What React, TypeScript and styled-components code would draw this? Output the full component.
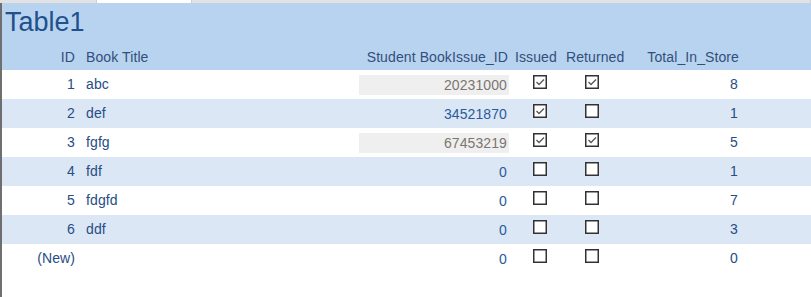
import React from "react";
import styled, { createGlobalStyle } from "styled-components";

const Global = createGlobalStyle`
  html, body { margin: 0; padding: 0; background: #ffffff; }
  body { font-family: "Liberation Sans", Arial, sans-serif; }
`;

const COLS = "78px 275px 157px 50px 78px 102px 1fr";

const Page = styled.div`
  width: 811px;
  height: 297px;
  display: flex;
  flex-direction: column;
  background: #ffffff;
  overflow: hidden;
`;

const TabStrip = styled.div`
  height: 3px;
  display: flex;
  background: #e2e2e2;
`;

const Tab = styled.div<{ $active?: boolean; $w: number }>`
  width: ${(p) => p.$w}px;
  height: 3px;
  background: ${(p) => (p.$active ? "#ffffff" : "#e2e2e2")};
  border-right: 1px solid #cfcfcf;
  box-sizing: border-box;
`;

const Frame = styled.div`
  flex: 1;
  display: flex;
  flex-direction: column;
  border-left: 2px solid #6f6f6f;
`;

const Header = styled.div`
  background: #b8d3ef;
  display: flex;
  flex-direction: column;
`;

const Title = styled.div`
  height: 41px;
  line-height: 39px;
  padding-left: 3px;
  font-size: 27px;
  color: #22508d;
`;

const Row = styled.div<{ $alt?: boolean }>`
  display: grid;
  grid-template-columns: ${COLS};
  height: 29px;
  line-height: 29px;
  font-size: 14px;
  letter-spacing: 0.1px;
  color: #274d85;
  background: ${(p) => (p.$alt ? "#dbe7f5" : "#ffffff")};
`;

const HeaderRow = styled(Row)`
  height: 26px;
  line-height: 26px;
  background: transparent;
  color: #324f7c;
`;

const Cell = styled.div<{ $align?: "left" | "right"; $pl?: number; $pr?: number }>`
  text-align: ${(p) => p.$align ?? "left"};
  padding-left: ${(p) => p.$pl ?? 0}px;
  padding-right: ${(p) => p.$pr ?? 0}px;
  white-space: nowrap;
  overflow: visible;
`;

const CheckCell = styled.div<{ $pl: number }>`
  padding-left: ${(p) => p.$pl}px;
  padding-top: 5px;
  display: flex;
  align-items: flex-start;
`;

const IdBox = styled.div<{ $locked?: boolean }>`
  margin: 5px 3px 0 4px;
  height: 20px;
  line-height: 20px;
  text-align: right;
  padding-right: 2px;
  background: ${(p) => (p.$locked ? "#efefef" : "transparent")};
  color: ${(p) => (p.$locked ? "#7b7670" : "#2a5a9c")};
`;

const Check = ({ on }: { on: boolean }) => (
  <svg width="14" height="14" viewBox="0 0 14 14">
    <rect x="0.75" y="0.75" width="12.5" height="12.5" fill="#ffffff" stroke="#333333" strokeWidth="1.5" />
    {on && <polyline points="3.5,7 6,9.5 11,4.5" fill="none" stroke="#555555" strokeWidth="1.3" />}
  </svg>
);

type R = { id: string; title: string; sid: string; locked?: boolean; iss: boolean; ret: boolean; total: string };

const rows: R[] = [
  { id: "1", title: "abc", sid: "20231000", locked: true, iss: true, ret: true, total: "8" },
  { id: "2", title: "def", sid: "34521870", iss: true, ret: false, total: "1" },
  { id: "3", title: "fgfg", sid: "67453219", locked: true, iss: true, ret: true, total: "5" },
  { id: "4", title: "fdf", sid: "0", iss: false, ret: false, total: "1" },
  { id: "5", title: "fdgfd", sid: "0", iss: false, ret: false, total: "7" },
  { id: "6", title: "ddf", sid: "0", iss: false, ret: false, total: "3" },
  { id: "(New)", title: "", sid: "0", iss: false, ret: false, total: "0" },
];

export default function App() {
  return (
    <Page>
      <Global />
      <TabStrip>
        <Tab $w={97} />
        <Tab $w={95} $active />
        <Tab $w={619} />
      </TabStrip>
      <Frame>
        <Header>
          <Title>Table1</Title>
          <HeaderRow>
            <Cell $align="right" $pr={5}>ID</Cell>
            <Cell $pl={6}>Book Title</Cell>
            <Cell $align="right" $pr={4}>Student BookIssue_ID</Cell>
            <Cell $pl={3}>Issued</Cell>
            <Cell $pl={4}>Returned</Cell>
            <Cell $align="right" $pr={3}>Total_In_Store</Cell>
            <div />
          </HeaderRow>
        </Header>
        {rows.map((r, i) => (
          <Row key={r.id} $alt={i % 2 === 1}>
            <Cell $align="right" $pr={5}>{r.id}</Cell>
            <Cell $pl={6}>{r.title}</Cell>
            <IdBox $locked={r.locked}>{r.sid}</IdBox>
            <CheckCell $pl={21}><Check on={r.iss} /></CheckCell>
            <CheckCell $pl={23}><Check on={r.ret} /></CheckCell>
            <Cell $align="right" $pr={4}>{r.total}</Cell>
            <div />
          </Row>
        ))}
      </Frame>
    </Page>
  );
}
